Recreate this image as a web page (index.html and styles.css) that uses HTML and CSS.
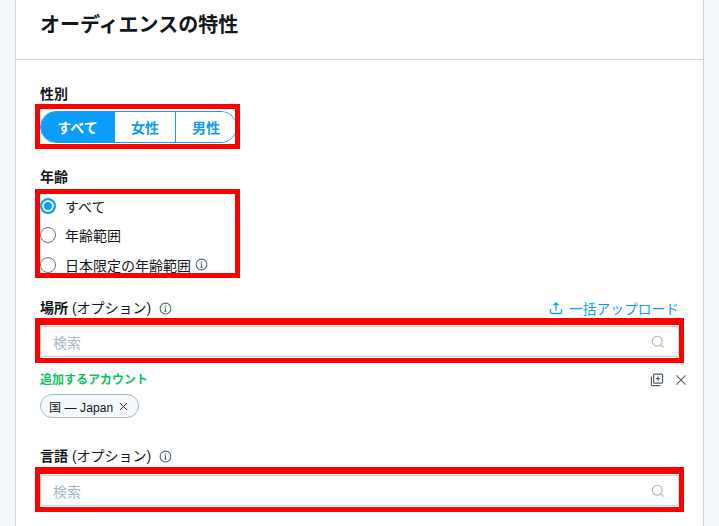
FILE: index.html
```html
<!DOCTYPE html>
<html lang="ja">
<head>
    <meta charset="UTF-8">
    <title>オーディエンスの特性</title>
    <link rel="stylesheet" href="styles.css">
</head>
<body>
    <div class="panel">
        <h1 class="panel-title">オーディエンスの特性</h1>
        <div class="panel-body">
            <div class="label gender-label">性別</div>
            <div class="mark gender-mark">
                <div class="segments">
                    <button class="segment active">すべて</button>
                    <button class="segment">女性</button>
                    <button class="segment">男性</button>
                </div>
            </div>

            <div class="label age-label">年齢</div>
            <div class="mark age-mark">
                <div class="radio-list">
                    <div class="radio-row"><span class="radio checked"></span>すべて</div>
                    <div class="radio-row"><span class="radio"></span>年齢範囲</div>
                    <div class="radio-row">
                        <span class="radio"></span>日本限定の年齢範囲
                        <svg class="info small-info" viewBox="0 0 14 14"><circle cx="7" cy="7" r="5.8"/><path d="M7 6.3v3.6M5.8 10h2.4M6 6.3h1"/><circle class="dot" cx="7" cy="4.2" r=".8"/></svg>
                    </div>
                </div>
            </div>

            <div class="label-row place-label">
                <div class="label">場所 <span class="option">(オプション)</span>
                    <svg class="info" viewBox="0 0 14 14"><circle cx="7" cy="7" r="5.8"/><path d="M7 6.3v3.6M5.8 10h2.4M6 6.3h1"/><circle class="dot" cx="7" cy="4.2" r=".8"/></svg>
                </div>
                <a class="upload">
                    <svg class="upload-icon" viewBox="0 0 14 14"><path d="M7 9.5V2M4.3 4.4 7 1.8l2.7 2.6M1.5 8v3.2c0 .8.5 1.3 1.3 1.3h8.4c.8 0 1.3-.5 1.3-1.3V8"/></svg>
                    一括アップロード
                </a>
            </div>
            <div class="mark search-mark">
                <div class="search">
                    <span class="placeholder">検索</span>
                    <svg class="search-icon" viewBox="0 0 14 14"><circle cx="6.2" cy="6.2" r="4.9"/><path d="m10 10 2.6 2.6"/></svg>
                </div>
            </div>

            <div class="added-row">
                <span class="added-title">追加するアカウント</span>
                <span class="added-actions">
                    <svg class="action-icon" viewBox="0 0 14 14"><rect x="3.6" y="1.2" width="9" height="9" rx="1"/><path d="M8.1 3.6v4.2M6 5.7h4.2M1.4 3.6v8c0 .6.4 1 1 1h8"/></svg>
                    <svg class="action-icon" viewBox="0 0 14 14"><path d="m2.4 2.4 9.2 9.2M11.6 2.4l-9.2 9.2"/></svg>
                </span>
            </div>
            <div class="chip">国 — Japan
                <svg class="chip-close" viewBox="0 0 10 10"><path d="m1 1 8 8M9 1 1 9"/></svg>
            </div>

            <div class="label lang-label">言語 <span class="option">(オプション)</span>
                <svg class="info" viewBox="0 0 14 14"><circle cx="7" cy="7" r="5.8"/><path d="M7 6.3v3.6M5.8 10h2.4M6 6.3h1"/><circle class="dot" cx="7" cy="4.2" r=".8"/></svg>
            </div>
            <div class="mark search-mark">
                <div class="search">
                    <span class="placeholder">検索</span>
                    <svg class="search-icon" viewBox="0 0 14 14"><circle cx="6.2" cy="6.2" r="4.9"/><path d="m10 10 2.6 2.6"/></svg>
                </div>
            </div>
        </div>
    </div>
</body>
</html>
```

FILE: styles.css
```css
body {
    margin: 0;
    height: 526px;
    overflow: hidden;
    background: #f5f8fa;
    color: #14171a;
    font-family: "Liberation Sans", "Noto Sans CJK JP", sans-serif;
    font-size: 14px;
}

.panel {
    margin: 0 15px;
    height: 526px;
    box-sizing: border-box;
    background: #fff;
    border-left: 1px solid #ccd6dd;
    border-right: 1px solid #ccd6dd;
}

.panel-title {
    margin: 0;
    height: 60px;
    padding: 12px 24px 0;
    box-sizing: border-box;
    border-bottom: 1px solid #ccd6dd;
    font-size: 20px;
    line-height: 26px;
    font-weight: 700;
    color: #14171a;
}

.panel-body {
    padding: 0 24px;
}

.label {
    font-size: 14px;
    line-height: 18px;
    font-weight: 700;
    color: #14171a;
}

.option {
    font-weight: 400;
}

.gender-label {
    padding-top: 25px;
}

.mark {
    border: 5px solid #fe0000;
    margin: 0 -5px;
    box-sizing: border-box;
}

.gender-mark {
    width: 205px;
    height: 45px;
    margin-top: 1px;
    padding-top: 2px;
    overflow: hidden;
}

.segments {
    display: flex;
    width: 197px;
    height: 32px;
    box-sizing: border-box;
    border: 1px solid #0a9dfb;
    border-radius: 16px;
    overflow: hidden;
}

.segment {
    flex: 1;
    margin: 0;
    padding: 0;
    border: 0;
    border-left: 1px solid #0a9dfb;
    background: #fff;
    color: #0a9dfb;
    font: 700 14px "Liberation Sans", "Noto Sans CJK JP", sans-serif;
}

.segment.active {
    flex: none;
    width: 73px;
    border-left: 0;
    background: #0a9dfb;
    color: #fff;
}

.age-label {
    padding-top: 19px;
}

.age-mark {
    width: 205px;
    height: 89px;
    margin-top: 3px;
}

.radio-list {
    margin-top: -3px;
}

.radio-row {
    display: flex;
    align-items: center;
    height: 29.5px;
    font-size: 14px;
    color: #14171a;
}

.radio {
    width: 16px;
    height: 16px;
    margin-right: 9px;
    box-sizing: border-box;
    border: 1px solid #657786;
    border-radius: 50%;
    background: #fff;
    flex: none;
}

.radio.checked {
    border: 2px solid #0a9dfb;
    box-shadow: inset 0 0 0 2px #fff;
    background: #0a9dfb;
}

.info {
    width: 13px;
    height: 13px;
    vertical-align: -2px;
    margin-left: 4px;
    fill: none;
    stroke: #536471;
    stroke-width: 1.1;
}

.small-info {
    margin-left: 4px;
}

.info .dot {
    fill: #536471;
    stroke: none;
}

.label-row {
    display: flex;
    justify-content: space-between;
    align-items: center;
    padding-top: 20px;
    height: 40px;
    box-sizing: border-box;
}

.upload {
    display: flex;
    align-items: center;
    gap: 6px;
    color: #0a9dfb;
    font-size: 13.75px;
}

.upload-icon {
    width: 14px;
    height: 14px;
    fill: none;
    stroke: #0a9dfb;
    stroke-width: 1.3;
}

.search-mark {
    height: 45px;
    border-top-width: 7px;
    padding-top: 1px;
}

.search {
    display: flex;
    align-items: center;
    justify-content: space-between;
    height: 31px;
    padding: 0 12px;
    box-sizing: border-box;
    border: 1px solid #ccd6dd;
    border-radius: 3px;
    background: #fff;
}

.placeholder {
    color: #aab8c2;
    font-size: 14px;
}

.search-icon {
    width: 14px;
    height: 14px;
    margin-right: 1px;
    fill: none;
    stroke: #aab8c2;
    stroke-width: 1.1;
}

.added-row {
    display: flex;
    justify-content: space-between;
    align-items: center;
    height: 20px;
    margin-top: 5px;
}

.added-title {
    color: #0cc45f;
    font-size: 12px;
    font-weight: 700;
}

.added-actions {
    display: flex;
    gap: 10px;
    margin-right: -9px;
    padding-top: 4px;
}

.action-icon {
    width: 14px;
    height: 14px;
    fill: none;
    stroke: #536471;
    stroke-width: 1.2;
}

.chip {
    display: flex;
    align-items: center;
    gap: 6px;
    width: fit-content;
    height: 24px;
    margin-top: 6px;
    padding: 0 10px 0 8px;
    box-sizing: border-box;
    border: 1px solid #aab8c2;
    border-radius: 12px;
    background: #f5f8fa;
    font-size: 12px;
    letter-spacing: .1px;
    color: #14171a;
}

.chip-close {
    width: 9px;
    height: 9px;
    fill: none;
    stroke: #333f48;
    stroke-width: 1.1;
}

.lang-label {
    padding-top: 29px;
    height: 18px;
    margin-bottom: 2px;
}
```
